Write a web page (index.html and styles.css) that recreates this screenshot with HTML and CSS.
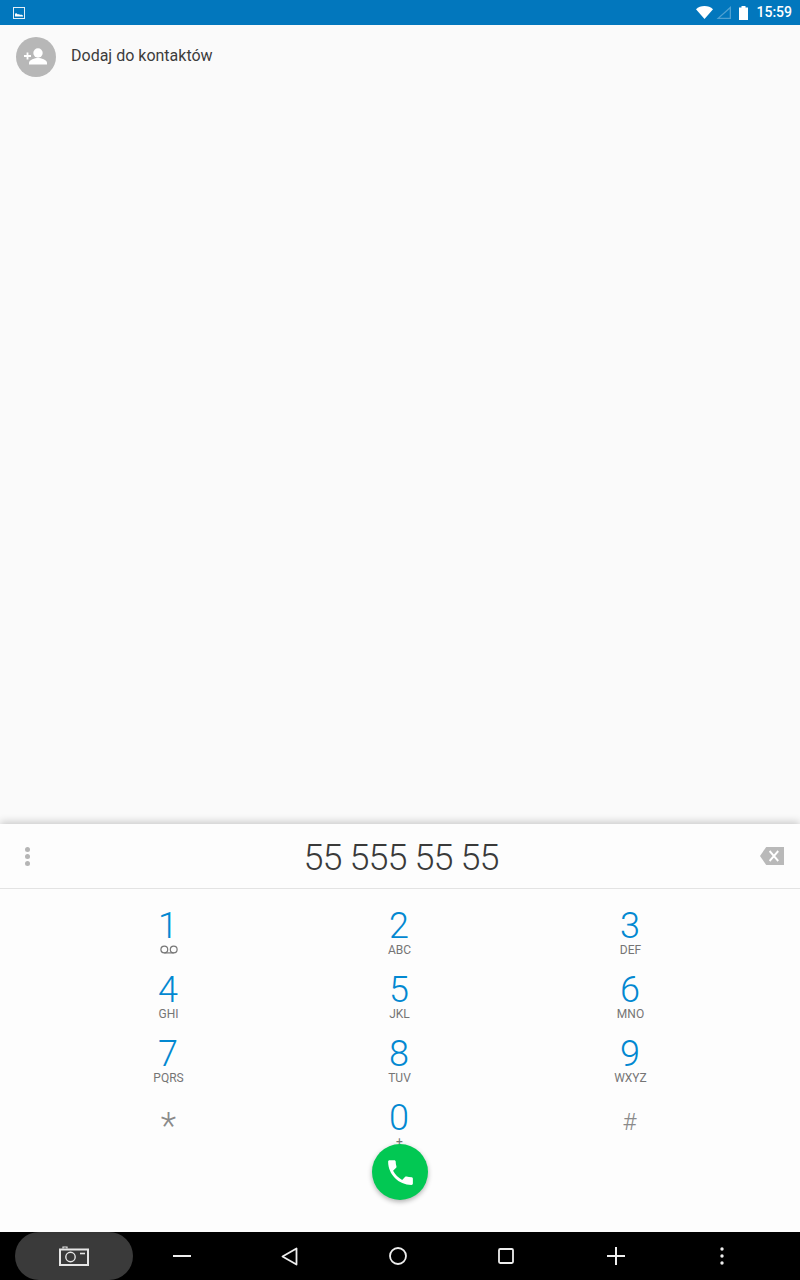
FILE: index.html
```html
<!DOCTYPE html>
<html lang="pl">
<head>
<meta charset="utf-8">
<title>Telefon</title>
<link rel="stylesheet" href="styles.css">
</head>
<body>
<div class="screen">
  <header class="status">
    <svg class="notif" width="12" height="12" viewBox="0 0 12 12"><rect x=".5" y=".5" width="11" height="11" fill="#0277bd" stroke="#e3eef6"/><path d="M2 9.5V7l1-1 2 1.5 1-.5 1 1 1-.5 2 1v1z" fill="#fff"/></svg>
    <div class="status-right">
      <svg width="17" height="13" viewBox="0 0 18 13" preserveAspectRatio="none"><path d="M0 3.200C2.300 1.200 5.500 0 9 0s6.700 1.200 9 3.200L9 13z" fill="#fff"/></svg>
      <svg class="sig" width="15" height="13" viewBox="0 0 15 13"><path d="M15 0v13H.5zM13.700 3 3.700 11.800h10z" fill="#fff" fill-opacity=".3" fill-rule="evenodd"/></svg>
      <svg class="bat" width="9" height="14" viewBox="0 0 9 14"><path d="M2.500 0h4v1.500H9V14H0V1.500h2.500z" fill="#fff"/></svg>
      <span class="clock">15:59</span>
    </div>
  </header>
  <main class="results">
    <div class="add-row">
      <span class="avatar">
        <svg width="26" height="26" viewBox="0 0 26 26"><circle cx="15" cy="9" r="4.700" fill="#fff"/><path d="M6 20.500v-1.800c0-3 6-4.700 9-4.700s9 1.700 9 4.700v1.800z" fill="#fff"/><path d="M1 12h7M4.500 8.500v7" stroke="#fff" stroke-width="1.800" fill="none"/></svg>
      </span>
      <span class="add-label">Dodaj do kontaktów</span>
    </div>
  </main>
  <section class="dialer">
    <div class="display">
      <span class="dots"><i></i><i></i><i></i></span>
      <span class="number">55 555 55 55</span>
      <svg class="backspace" width="24" height="18" viewBox="0 0 25 18" preserveAspectRatio="none"><path d="M6.500 0H25v18H6.500L0 9z" fill="#b9b9b9"/><path d="M10 4l9 10M19 4l-9 10" stroke="#fff" stroke-width="1.900" fill="none"/></svg>
    </div>
    <div class="keypad">
      <div class="key"><span class="d">1</span>
        <svg class="vm" width="18" height="9" viewBox="0 0 18 9"><circle cx="4.300" cy="4.500" r="3.400" fill="none" stroke="#777" stroke-width="1.200"/><circle cx="13.700" cy="4.500" r="3.400" fill="none" stroke="#777" stroke-width="1.200"/><path d="M4.300 7.900h9.400" stroke="#777" stroke-width="1.200"/></svg>
      </div>
      <div class="key"><span class="d">2</span><span class="l">ABC</span></div>
      <div class="key"><span class="d">3</span><span class="l">DEF</span></div>
      <div class="key"><span class="d">4</span><span class="l">GHI</span></div>
      <div class="key"><span class="d">5</span><span class="l">JKL</span></div>
      <div class="key"><span class="d">6</span><span class="l">MNO</span></div>
      <div class="key"><span class="d">7</span><span class="l">PQRS</span></div>
      <div class="key"><span class="d">8</span><span class="l">TUV</span></div>
      <div class="key"><span class="d">9</span><span class="l">WXYZ</span></div>
      <div class="key"><span class="d sym">*</span></div>
      <div class="key"><span class="d">0</span><span class="l">+</span></div>
      <div class="key"><span class="d sym hash">#</span></div>
    </div>
    <button class="fab" type="button" aria-label="Zadzwoń">
      <svg width="33" height="33" viewBox="0 0 24 24"><path d="M6.620 10.790c1.440 2.830 3.760 5.140 6.590 6.590l2.200-2.200c.27-.27.67-.36 1.020-.24 1.120.37 2.330.57 3.570.57.550 0 1 .45 1 1V20c0 .55-.45 1-1 1C10.610 21 3 13.390 3 4c0-.55.450-1 1-1h3.500c.55 0 1 .45 1 1 0 1.250.2 2.450.57 3.570.11.350.03.740-.25 1.020z" fill="#fff"/></svg>
    </button>
  </section>
  <nav class="nav">
    <span class="shot">
      <svg width="30" height="20" viewBox="0 0 30 20"><path d="M1 3.500h28v15.500H1z" fill="none" stroke="#e6e6e6" stroke-width="2"/><path d="M4 2.500V1h4v1.500" fill="none" stroke="#e6e6e6" stroke-width="1.200"/><circle cx="11.500" cy="11" r="4.700" fill="none" stroke="#e6e6e6" stroke-width="1.400"/><path d="M21 7.500h5" stroke="#e6e6e6" stroke-width="1.600"/></svg>
    </span>
    <svg class="n1" width="18" height="2" viewBox="0 0 18 2"><path d="M0 1h18" stroke="#eee" stroke-width="2"/></svg>
    <svg class="n2" width="17" height="19" viewBox="0 0 17 19"><path d="M15.500 1.500v16L1.500 9.500z" fill="none" stroke="#eee" stroke-width="1.800" stroke-linejoin="round"/></svg>
    <svg class="n3" width="18" height="18" viewBox="0 0 18 18"><circle cx="9" cy="9" r="8" fill="none" stroke="#eee" stroke-width="1.800"/></svg>
    <svg class="n4" width="16" height="16" viewBox="0 0 16 16"><rect x="1" y="1" width="14" height="14" rx="1.200" fill="none" stroke="#eee" stroke-width="1.800"/></svg>
    <svg class="n5" width="18" height="18" viewBox="0 0 18 18"><path d="M0 9h18M9 0v18" stroke="#eee" stroke-width="2"/></svg>
    <svg class="n6" width="4" height="18" viewBox="0 0 4 18"><circle cx="2" cy="2" r="1.700" fill="#eee"/><circle cx="2" cy="9" r="1.700" fill="#eee"/><circle cx="2" cy="16" r="1.700" fill="#eee"/></svg>
  </nav>
</div>
</body>
</html>
```
FILE: styles.css
```css
* { box-sizing: border-box; }
html, body { margin: 0; padding: 0; }
body { font-family: Roboto, "Liberation Sans", sans-serif; background: #fafafa; }
.screen { width: 800px; height: 1280px; display: flex; flex-direction: column; overflow: hidden; }

.status { height: 25px; flex: none; background: #0277bd; display: flex; align-items: center; justify-content: space-between; padding: 0 8px 0 13px; }
.status-right { display: flex; align-items: center; }
.sig { margin-left: 3px; }
.bat { margin-left: 8px; }
.clock { margin-left: 8px; color: #fff; font-size: 14px; font-weight: 500; line-height: 25px; }

.results { flex: 1; background: #fafafa; padding: 12px 16px 0; }
.add-row { display: flex; align-items: center; height: 40px; }
.avatar { width: 40px; height: 40px; border-radius: 50%; background: #b7b7b7; display: flex; align-items: center; justify-content: center; }
.add-label { margin-left: 15px; margin-bottom: 4px; font-size: 16px; color: #3c3c3c; }

.dialer { height: 408px; flex: none; background: #fdfdfd; position: relative; box-shadow: 0 -2px 8px rgba(0,0,0,.2); }
.display { height: 65px; border-bottom: 1px solid #e3e3e3; display: flex; align-items: center; justify-content: space-between; padding: 0 16px 0 25px; }
.dots { display: flex; flex-direction: column; gap: 2px; width: 6px; }
.dots i { width: 5px; height: 5px; border-radius: 50%; background: #b5b5b5; }
.number { flex: 1; text-align: center; font-size: 36px; font-weight: 300; color: #3a3a3a; letter-spacing: -.9px; padding-left: 11px; margin-top: 4px; line-height: 60px; }

.keypad { display: grid; grid-template-columns: repeat(3, 231px); grid-auto-rows: 64px; padding: 19px 0 0 53px; }
.key { display: flex; flex-direction: column; align-items: center; }
.d { font-size: 36px; font-weight: 300; color: #0288d1; line-height: 36px; margin-right: 1px; }
.l { font-size: 12px; color: #757575; line-height: 12px; }
.vm { margin-top: 1px; }
.sym { color: #8a8a8a; margin-top: 8px; margin-right: 0; }
.hash { font-size: 24px; margin-top: 4px; margin-right: 2px; }

.fab { position: absolute; left: 372px; top: 320px; width: 56px; height: 56px; padding: 0; border: 0; border-radius: 50%; background: #02c853; display: flex; align-items: center; justify-content: center; box-shadow: 0 2px 5px rgba(0,0,0,.3); }

.nav { height: 48px; flex: none; background: #000; display: flex; align-items: center; padding-left: 15px; }
.shot { width: 118px; height: 48px; border-radius: 24px; background: #3a3a3a; display: flex; align-items: center; justify-content: center; }
.n1 { margin-left: 40px; }
.n2 { margin-left: 90px; }
.n3 { margin-left: 91px; }
.n4 { margin-left: 91px; }
.n5 { margin-left: 93px; }
.n6 { margin-left: 95px; }
```
